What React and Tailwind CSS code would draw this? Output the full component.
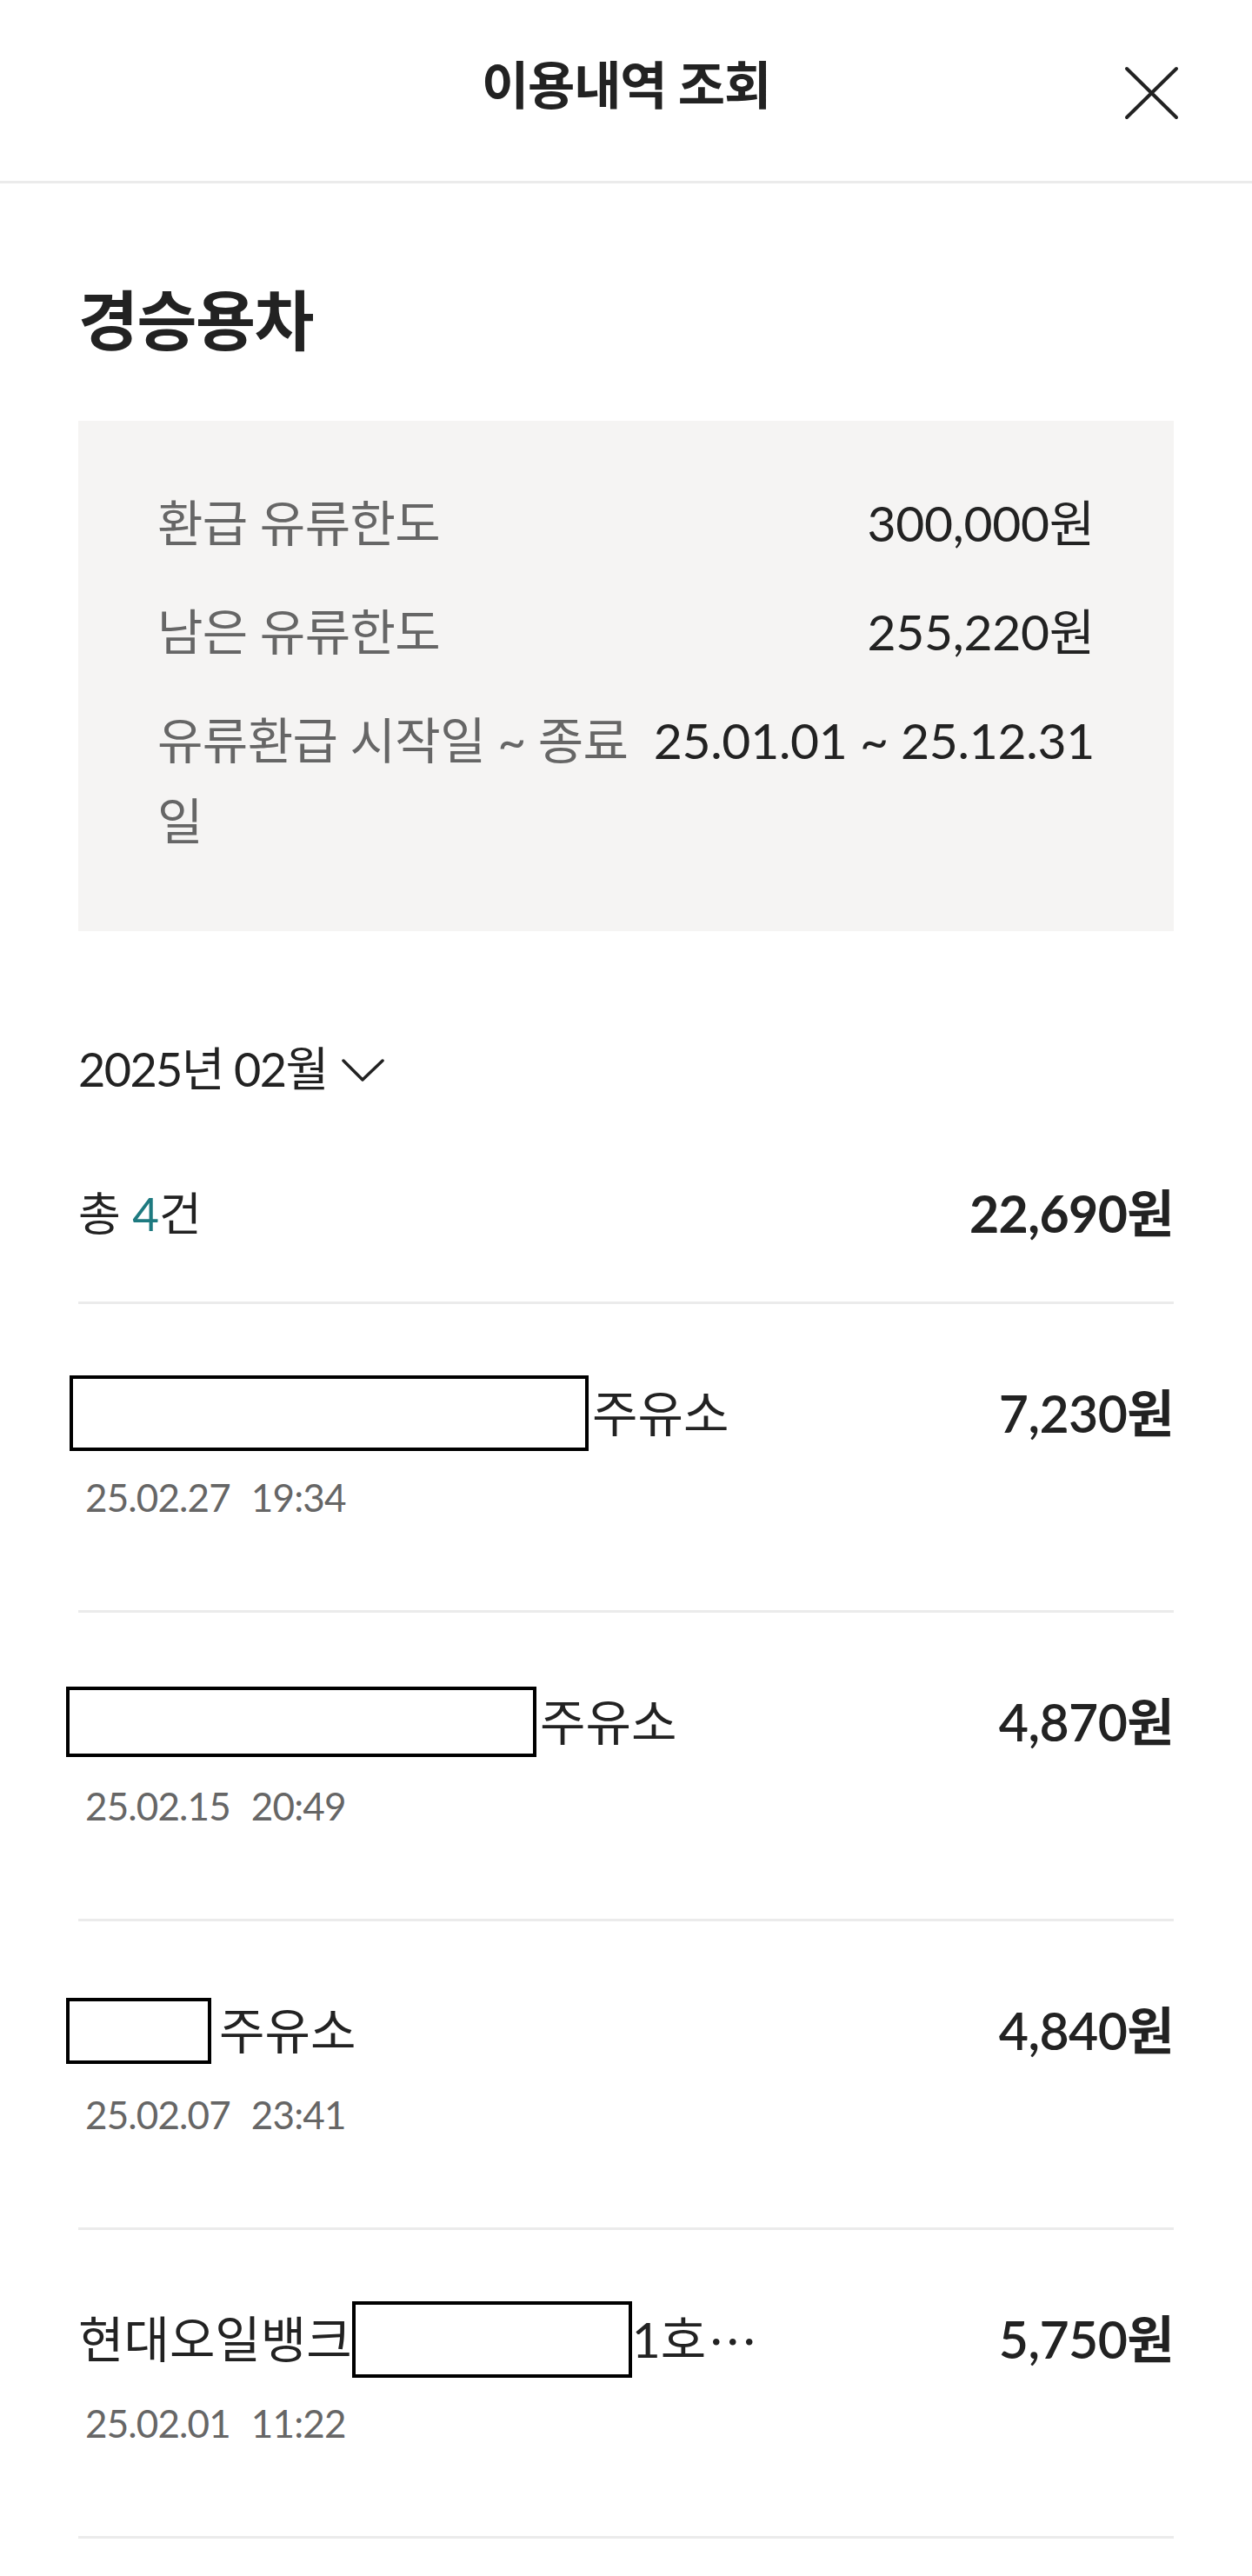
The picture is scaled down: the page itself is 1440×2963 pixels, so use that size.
import React from 'react';

const LIMITS = [
  { label: '환급 유류한도', value: '300,000원' },
  { label: '남은 유류한도', value: '255,220원' },
  { label: '유류환급 시작일 ~ 종료일', value: '25.01.01 ~ 25.12.31' },
];

// 가림 박스: 흰 바탕 + 검은 테두리
function Mask({ w, h, className = '' }) {
  return <span className={`inline-block shrink-0 bg-white border-[4px] border-black ${className}`} style={{ width: w, height: h }} />;
}

const ITEMS = [
  {
    id: 1,
    name: (
      <>
        <Mask w={597} h={87} className="-ml-[10px] mr-[4px]" />
        <span>주유소</span>
      </>
    ),
    date: '25.02.27',
    time: '19:34',
    amount: '7,230원',
  },
  {
    id: 2,
    name: (
      <>
        <Mask w={541} h={81} className="-ml-[14px] mr-[4px]" />
        <span>주유소</span>
      </>
    ),
    date: '25.02.15',
    time: '20:49',
    amount: '4,870원',
  },
  {
    id: 3,
    name: (
      <>
        <Mask w={167} h={76} className="-ml-[14px] mr-[9px]" />
        <span>주유소</span>
      </>
    ),
    date: '25.02.07',
    time: '23:41',
    amount: '4,840원',
  },
  {
    id: 4,
    name: (
      <>
        <span>현대오일뱅크</span>
        <Mask w={322} h={88} />
        <span>1호</span>
        <span className="font-['Noto_Sans_CJK_KR',sans-serif] ml-[2px]">⋯</span>
      </>
    ),
    date: '25.02.01',
    time: '11:22',
    amount: '5,750원',
  },
];

export default function App() {
  return (
    <div className="min-h-screen bg-white text-[#222] font-['Lato','Noto_Sans_CJK_KR',sans-serif]">
      {/* Header */}
      <header className="relative h-[211px] border-b-[3px] border-[#ebebeb] flex items-center justify-center">
        <h1 className="text-[59px] font-semibold tracking-[-0.02em] -mt-[12px]">이용내역 조회</h1>
        <button className="absolute right-[80px] top-[72px] w-[70px] h-[70px] flex items-center justify-center">
          <svg width="70" height="70" viewBox="0 0 70 70" fill="none" stroke="#222" strokeWidth="4" strokeLinecap="round">
            <path d="M6 7 L63 63 M63 7 L6 63" />
          </svg>
        </button>
      </header>

      <main className="px-[90px]">
        <h2 className="pt-[111px] text-[75px] leading-[92px] font-bold tracking-[-0.02em]">경승용차</h2>

        {/* 한도 박스 */}
        <section className="mt-[70px] bg-[#f5f4f3] px-[91px] pt-[71px] pb-[80px] flex flex-col gap-[32px]">
          {LIMITS.map(row => (
            <div key={row.label} className="flex justify-between text-[57px] leading-[93px]">
              <span className="text-[#666] flex-1 pr-[10px] tracking-[-0.01em]">{row.label}</span>
              <span className="shrink-0 text-[#222] tracking-[-0.005em]">{row.value}</span>
            </div>
          ))}
        </section>

        {/* 월 선택 */}
        <button className="mt-[112px] flex items-center gap-[16px] text-[54px] leading-[93px] tracking-[-0.03em]">
          <span>2025년 02월</span>
          <svg width="50" height="30" viewBox="0 0 50 30" fill="none" stroke="#222" strokeWidth="3.5" strokeLinecap="round" strokeLinejoin="round">
            <path d="M2 5 L24 27 L47 5" />
          </svg>
        </button>

        {/* 합계 */}
        <div className="mt-[73px] flex items-center justify-between leading-[93px]">
          <span className="text-[53px]">
            총 <span className="text-[#1e7a80]">4</span>건
          </span>
          <span className="text-[59px] font-bold tracking-[-0.01em]">22,690원</span>
        </div>

        <ul className="mt-[55px] border-t-[3px] border-[#ebebeb]">
          {ITEMS.map(item => (
            <li key={item.id} className="border-b-[3px] border-[#ebebeb] pt-[77px] pb-[92px]">
              <div className="flex items-center justify-between">
                <div className="flex items-center h-[97px] text-[57px] whitespace-nowrap">{item.name}</div>
                <span className="text-[59px] font-semibold tracking-[-0.01em] leading-[97px]">{item.amount}</span>
              </div>
              <div className="mt-[10px] pl-[8px] flex gap-[24px] text-[44px] leading-[76px] text-[#666] tracking-[-0.02em]">
                <span>{item.date}</span>
                <span>{item.time}</span>
              </div>
            </li>
          ))}
        </ul>
      </main>
    </div>
  );
}
